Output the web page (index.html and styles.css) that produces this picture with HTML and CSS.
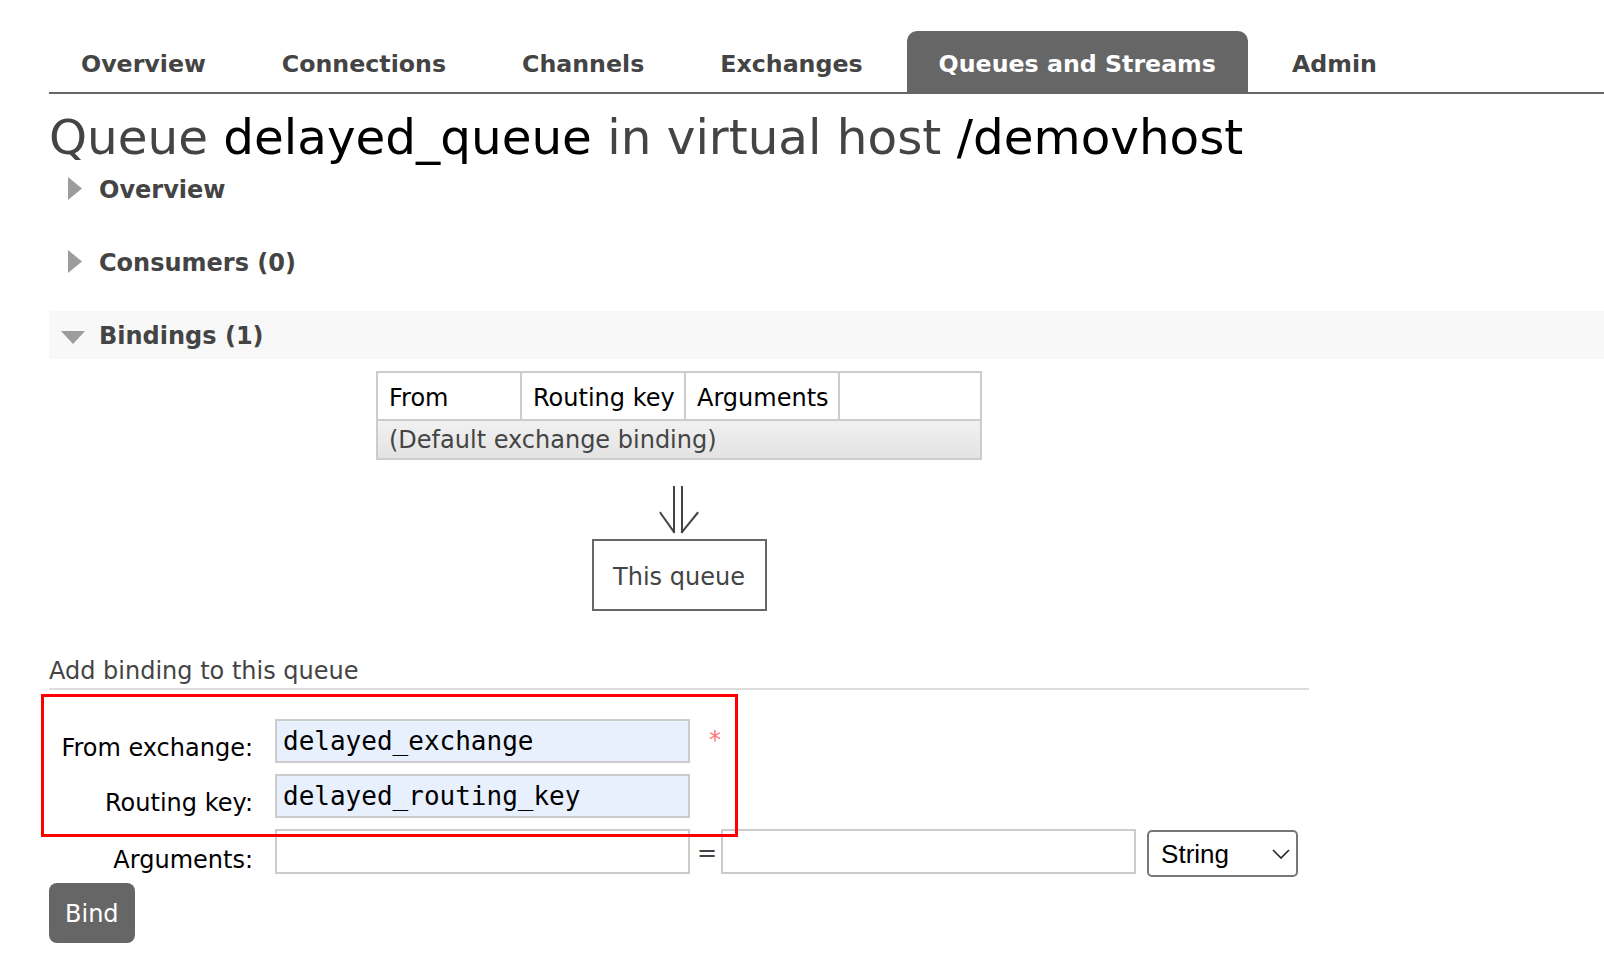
FILE: index.html
```html
<!DOCTYPE html>
<html lang="en">
<head>
<meta charset="utf-8">
<title>Queue delayed_queue</title>
<link rel="stylesheet" href="styles.css">
</head>
<body>
<div class="page">
  <nav class="menu">
    <ul>
      <li><a href="#">Overview</a></li>
      <li><a href="#">Connections</a></li>
      <li><a href="#">Channels</a></li>
      <li><a href="#">Exchanges</a></li>
      <li class="active"><a href="#">Queues and Streams</a></li>
      <li><a href="#">Admin</a></li>
    </ul>
  </nav>

  <h1>Queue <span class="hl">delayed_queue</span> in virtual host <span class="hl">/demovhost</span></h1>

  <div class="section">
    <h2 class="sec-head"><svg class="tri" viewBox="0 0 50 48"><polygon points="19,11 33,22.5 19,34" fill="#9c9c9c"/></svg>Overview</h2>
  </div>

  <div class="section">
    <h2 class="sec-head"><svg class="tri" viewBox="0 0 50 48"><polygon points="19,11 33,22.5 19,34" fill="#9c9c9c"/></svg>Consumers (0)</h2>
  </div>

  <div class="section open">
    <h2 class="sec-head"><svg class="tri" viewBox="0 0 50 48"><polygon points="12,19 36,19 24,32" fill="#9c9c9c"/></svg>Bindings (1)</h2>

    <div class="bindings">
      <div class="diagram">
        <table class="list">
          <colgroup>
            <col class="c-from"><col class="c-key"><col class="c-args"><col class="c-act">
          </colgroup>
          <thead>
            <tr><th>From</th><th>Routing key</th><th>Arguments</th><th></th></tr>
          </thead>
          <tbody>
            <tr><td colspan="4">(Default exchange binding)</td></tr>
          </tbody>
        </table>
        <svg class="arrow" viewBox="0 0 40 48">
          <g stroke="#444" stroke-width="2" fill="none" stroke-linecap="square">
            <line x1="15" y1="1" x2="15" y2="46"/>
            <line x1="23" y1="1" x2="23" y2="46"/>
            <line x1="1.5" y1="27" x2="15" y2="46"/>
            <line x1="38.5" y1="27" x2="23" y2="46"/>
          </g>
        </svg>
        <div class="this-queue">This queue</div>
      </div>

      <h3 class="sub">Add binding to this queue</h3>

      <form class="bind-form">
        <div class="form-grid">
          <label class="lbl">From exchange:</label>
          <div class="field field-top">
            <input class="txt autofill" type="text" value="delayed_exchange">
            <span class="req">*</span>
          </div>

          <label class="lbl">Routing key:</label>
          <div class="field">
            <input class="txt autofill" type="text" value="delayed_routing_key">
          </div>

          <label class="lbl">Arguments:</label>
          <div class="field field-top">
            <input class="txt tall" type="text" value="">
            <span class="eq">=</span>
            <input class="txt tall" type="text" value="">
            <span class="sel-wrap">
              <select class="sel"><option>String</option></select>
              <svg class="chev" viewBox="0 0 18 10"><polyline points="1,1 9,9 17,1" fill="none" stroke="#222" stroke-width="1.6"/></svg>
            </span>
          </div>
        </div>
        <button class="btn" type="button">Bind</button>
        <div class="annot"></div>
      </form>
    </div>
  </div>
</div>
</body>
</html>
```

FILE: styles.css
```css
* {
  box-sizing: border-box;
}

body {
  margin: 0;
  background: #fff;
  color: #444;
  font-family: "DejaVu Sans", Verdana, sans-serif;
  font-size: 24px;
}

.page {
  padding-left: 49px;
}

/* top menu */
.menu {
  margin-top: 31px;
  border-bottom: 2px solid #666;
}

.menu ul {
  list-style: none;
  margin: 0;
  padding: 0;
  display: flex;
}

.menu li {
  margin-right: 12px;
}

.menu a {
  display: flex;
  align-items: center;
  height: 61px;
  padding: 4px 32px 0;
  font-size: 23.7px;
  font-weight: bold;
  color: #444;
  text-decoration: none;
  white-space: nowrap;
  border-radius: 10px 10px 0 0;
}

.menu .active a {
  background: #666;
  color: #fff;
}

/* title */
h1 {
  margin: 16px 0 0;
  font-size: 48.4px;
  font-weight: normal;
  line-height: 55px;
  color: #444;
  white-space: nowrap;
}

.hl {
  color: #000;
}

/* sections */
.section + .section {
  margin-top: 25px;
}

.sec-head {
  display: flex;
  align-items: center;
  height: 48px;
  margin: 0;
  padding-top: 1px;
  font-size: 24px;
  font-weight: bold;
  color: #444;
}

.section.open .sec-head {
  background: #f8f8f8;
}

.tri {
  width: 50px;
  height: 48px;
  flex: none;
}

/* bindings */
.bindings {
  width: 1260px;
}

.diagram {
  display: flex;
  flex-direction: column;
  align-items: center;
  padding-top: 12px;
}

table.list {
  border-collapse: collapse;
  table-layout: fixed;
  width: 604px;
  border: 2px solid #ccc;
}

.c-from { width: 144px; }
.c-key { width: 164px; }
.c-args { width: 154px; }
.c-act { width: 142px; }

table.list th {
  height: 48px;
  padding: 3px 11px 0;
  text-align: left;
  font-weight: normal;
  color: #000;
  border: 2px solid #ccc;
  background: #fff;
  white-space: nowrap;
}

table.list td {
  height: 39px;
  padding: 1px 11px 0;
  color: #444;
  border: 2px solid #ccc;
  background: linear-gradient(#f1f1f1, #e3e3e3);
  white-space: nowrap;
}

.arrow {
  width: 40px;
  height: 48px;
  margin-top: 26px;
}

.this-queue {
  display: flex;
  align-items: center;
  justify-content: center;
  width: 175px;
  height: 72px;
  margin-top: 5px;
  padding-top: 3px;
  border: 2px solid #666;
  color: #444;
}

.sub {
  margin: 45px 0 0;
  padding-bottom: 2px;
  line-height: 30px;
  font-size: 24px;
  font-weight: normal;
  color: #444;
  border-bottom: 2px solid #ddd;
}

/* form */
.bind-form {
  position: relative;
  padding-top: 29px;
}

.form-grid {
  display: grid;
  grid-template-columns: 204px auto;
  justify-content: start;
  column-gap: 22px;
  row-gap: 11px;
}

.lbl {
  align-self: center;
  margin-top: 13px;
  text-align: right;
  color: #000;
  white-space: nowrap;
}

.field {
  display: flex;
  align-items: center;
}

.field-top {
  align-items: flex-start;
}

.txt {
  width: 415px;
  height: 44px;
  margin: 0;
  padding: 0 6px;
  border: 2px solid #ccc;
  border-radius: 0;
  background: #fff;
  color: #000;
  font-family: "DejaVu Sans Mono", monospace;
  font-size: 26px;
  outline: none;
}

.txt.tall {
  height: 45px;
}

.autofill {
  background: #e8f0fe;
}

.req {
  margin-left: 19px;
  margin-top: 9px;
  line-height: 24px;
  color: #f77;
}

.eq {
  align-self: center;
  margin: 0 4px 0 7px;
  color: #444;
}

.sel-wrap {
  position: relative;
  display: block;
  margin-left: 11px;
  margin-top: 1px;
}

.sel {
  display: block;
  width: 151px;
  height: 47px;
  margin: 0;
  padding: 0 0 0 12px;
  border: 2px solid #777;
  border-radius: 5px;
  background: #fff;
  color: #000;
  font-family: "Liberation Sans", Arial, sans-serif;
  font-size: 26px;
  -webkit-appearance: none;
  appearance: none;
}

.chev {
  position: absolute;
  right: 8px;
  top: 19px;
  width: 18px;
  height: 10px;
  pointer-events: none;
}

.btn {
  display: block;
  height: 60px;
  margin-top: 6px;
  padding: 2px 16px 0;
  border: none;
  border-radius: 8px;
  background: #666;
  color: #fff;
  font-family: "DejaVu Sans", Verdana, sans-serif;
  font-size: 24px;
}

/* red annotation box drawn over the form */
.annot {
  position: absolute;
  left: -8px;
  top: 4px;
  width: 697px;
  height: 143px;
  border: 3px solid #f00;
  pointer-events: none;
}
```
